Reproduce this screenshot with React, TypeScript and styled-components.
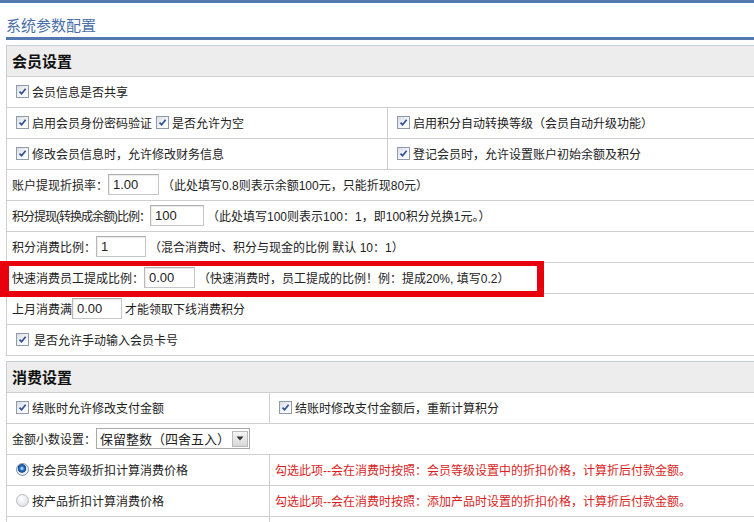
import React from "react";
import styled, { createGlobalStyle } from "styled-components";

const GlobalStyle = createGlobalStyle`
  html, body { margin: 0; padding: 0; background: #fff; overflow: hidden; }
  body {
    font-family: "Liberation Sans", "Noto Sans CJK SC", sans-serif;
    font-size: 12px;
    color: #222;
  }
  * { box-sizing: border-box; }
`;

const Page = styled.div`
  width: 754px;
  height: 522px;
  overflow: hidden;
`;

const TopBar = styled.div`
  height: 3px;
  background: #5478b0;
`;

const Title = styled.h1`
  margin: 0;
  height: 34px;
  padding: 14px 0 0 6px;
  font-family: "Noto Sans CJK SC", sans-serif;
  font-size: 15px;
  line-height: 16px;
  font-weight: normal;
  color: #4a6fa8;
`;

const Content = styled.div`
  margin-left: 6px;
  border-top: 3px solid #5478b0;
  padding-top: 5px;
`;

const Table = styled.section`
  border-left: 1px solid #cfcfcf;
  & + & {
    margin-top: 5px;
  }
`;

const Header = styled.div`
  height: 32px;
  border-top: 1px solid #c3cedb;
  border-bottom: 1px solid #cfcfcf;
  background: #ededed;
  padding-left: 5px;
  padding-bottom: 2px;
  display: flex;
  align-items: center;
  font-family: "Noto Sans CJK SC", sans-serif;
  font-size: 15px;
  font-weight: bold;
  color: #111;
`;

const Row = styled.div<{ $split?: number }>`
  position: relative;
  height: 31px;
  border-bottom: 1px solid #cfcfcf;
  display: grid;
  grid-template-columns: ${(p) => (p.$split ? `${p.$split}px 1fr` : "1fr")};
`;

const Cell = styled.div<{ $tone?: "alert" }>`
  display: flex;
  align-items: center;
  padding-left: 5px;
  padding-bottom: 1px;
  white-space: nowrap;
  color: ${(p) => (p.$tone === "alert" ? "#d81e1e" : "#222")};
  & + & {
    border-left: 1px solid #cfcfcf;
  }
`;

const Box = styled.span<{ $gap?: number }>`
  display: inline-flex;
  align-items: center;
  justify-content: center;
  flex: none;
  width: 13px;
  height: 13px;
  margin: 0 ${(p) => p.$gap ?? 3}px 0 4px;
  border: 1px solid #8f9bad;
  background: linear-gradient(135deg, #d9dce2 0%, #f6f7f9 60%, #ffffff 100%);
`;

const RadioDot = styled.span<{ $on?: boolean }>`
  display: inline-block;
  flex: none;
  width: 13px;
  height: 13px;
  margin: 0 3px 0 4px;
  border-radius: 50%;
  border: 1px solid ${(p) => (p.$on ? "#7d8ea8" : "#b8bcc3")};
  background: ${(p) =>
    p.$on
      ? "radial-gradient(circle at 45% 40%, #9fd0ff 0 1px, #2f78c8 2px, #154b8f 4px, #e9edf3 4.6px, #f8f9fb 100%)"
      : "radial-gradient(circle at 40% 35%, #ffffff 0%, #e2e4e8 70%, #cfd2d7 100%)"};
`;

const Field = styled.input<{ $w: number }>`
  width: ${(p) => p.$w}px;
  height: 21px;
  flex: none;
  border: 1px solid #c6c6c6;
  border-top-color: #aeaeae;
  border-left-color: #b8b8b8;
  box-shadow: inset 1px 1px 1px #ececec;
  padding: 0 4px;
  font: 13px "Liberation Sans", sans-serif;
  color: #222;
  background: #fff;
  outline: none;
`;

const Hint = styled.span`
  margin-left: 3px;
`;

const Tight = styled.span`
  letter-spacing: -1px;
`;

const Select = styled.div`
  display: inline-flex;
  align-items: center;
  justify-content: space-between;
  width: 154px;
  height: 21px;
  border: 1px solid #a9a9a9;
  background: #fff;
  padding-left: 3px;
  font-size: 13px;
  color: #222;
`;

const SelectArrow = styled.span`
  display: flex;
  align-items: center;
  justify-content: center;
  width: 16px;
  height: 16px;
  margin-right: 1px;
  border: 1px solid #b9b9b9;
  background: linear-gradient(#f4f4f4, #d8d8d8);
`;

const Highlight = styled.div`
  position: absolute;
  left: -7px;
  top: -2px;
  width: 544px;
  height: 36px;
  border-style: solid;
  border-color: #e8000c;
  border-width: 5px 7px 6px 9px;
  pointer-events: none;
`;

const Check: React.FC<{ gap?: number }> = ({ gap }) => (
  <Box $gap={gap}>
    <svg width="9" height="9" viewBox="0 0 9 9">
      <path d="M1.5 4.6 L3.6 6.8 L7.6 1.8" fill="none" stroke="#2f4f96" strokeWidth="1.7" />
    </svg>
  </Box>
);

const Arrow = () => (
  <svg width="8" height="5" viewBox="0 0 8 5">
    <path d="M0.5 0.5 H7.5 L4 4.5 Z" fill="#333" />
  </svg>
);

export default function App() {
  return (
    <Page>
      <GlobalStyle />
      <TopBar />
      <Title>系统参数配置</Title>
      <Content>
        <Table>
          <Header>会员设置</Header>
          <Row>
            <Cell>
              <Check />
              会员信息是否共享
            </Cell>
          </Row>
          <Row $split={380}>
            <Cell>
              <Check />
              启用会员身份密码验证
              <Check />
              是否允许为空
            </Cell>
            <Cell>
              <Check />
              启用积分自动转换等级（会员自动升级功能）
            </Cell>
          </Row>
          <Row $split={380}>
            <Cell>
              <Check />
              修改会员信息时，允许修改财务信息
            </Cell>
            <Cell>
              <Check />
              登记会员时，允许设置账户初始余额及积分
            </Cell>
          </Row>
          <Row>
            <Cell>
              账户提现折损率：
              <Field $w={51} value="1.00" readOnly />
              <Hint>（此处填写0.8则表示余额100元，只能折现80元）</Hint>
            </Cell>
          </Row>
          <Row>
            <Cell>
              <Tight>积分提现(转换成余额)比例：</Tight>
              <Field $w={54} value="100" readOnly />
              <Hint>（此处填写100则表示100：1，即100积分兑换1元。）</Hint>
            </Cell>
          </Row>
          <Row>
            <Cell>
              积分消费比例：
              <Field $w={50} value="1" readOnly />
              <Hint>（混合消费时、积分与现金的比例 默认 10：1）</Hint>
            </Cell>
          </Row>
          <Row>
            <Cell>
              快速消费员工提成比例：
              <Field $w={51} value="0.00" readOnly />
              <Hint>（快速消费时，员工提成的比例！例：提成20%, 填写0.2）</Hint>
            </Cell>
            <Highlight />
          </Row>
          <Row>
            <Cell>
              上月消费满
              <Field $w={50} value="0.00" readOnly />
              <Hint>才能领取下线消费积分</Hint>
            </Cell>
          </Row>
          <Row>
            <Cell>
              <Check gap={5} />
              是否允许手动输入会员卡号
            </Cell>
          </Row>
        </Table>
        <Table>
          <Header>消费设置</Header>
          <Row $split={262}>
            <Cell>
              <Check />
              结账时允许修改支付金额
            </Cell>
            <Cell>
              <Check />
              结账时修改支付金额后，重新计算积分
            </Cell>
          </Row>
          <Row>
            <Cell>
              金额小数设置：
              <Select>
                保留整数（四舍五入）
                <SelectArrow>
                  <Arrow />
                </SelectArrow>
              </Select>
            </Cell>
          </Row>
          <Row $split={262}>
            <Cell>
              <RadioDot $on />
              按会员等级折扣计算消费价格
            </Cell>
            <Cell $tone="alert">勾选此项--会在消费时按照：会员等级设置中的折扣价格，计算折后付款金额。</Cell>
          </Row>
          <Row $split={262}>
            <Cell>
              <RadioDot />
              按产品折扣计算消费价格
            </Cell>
            <Cell $tone="alert">勾选此项--会在消费时按照：添加产品时设置的折扣价格，计算折后付款金额。</Cell>
          </Row>
          <Row $split={262}>
            <Cell />
            <Cell />
          </Row>
        </Table>
      </Content>
    </Page>
  );
}
